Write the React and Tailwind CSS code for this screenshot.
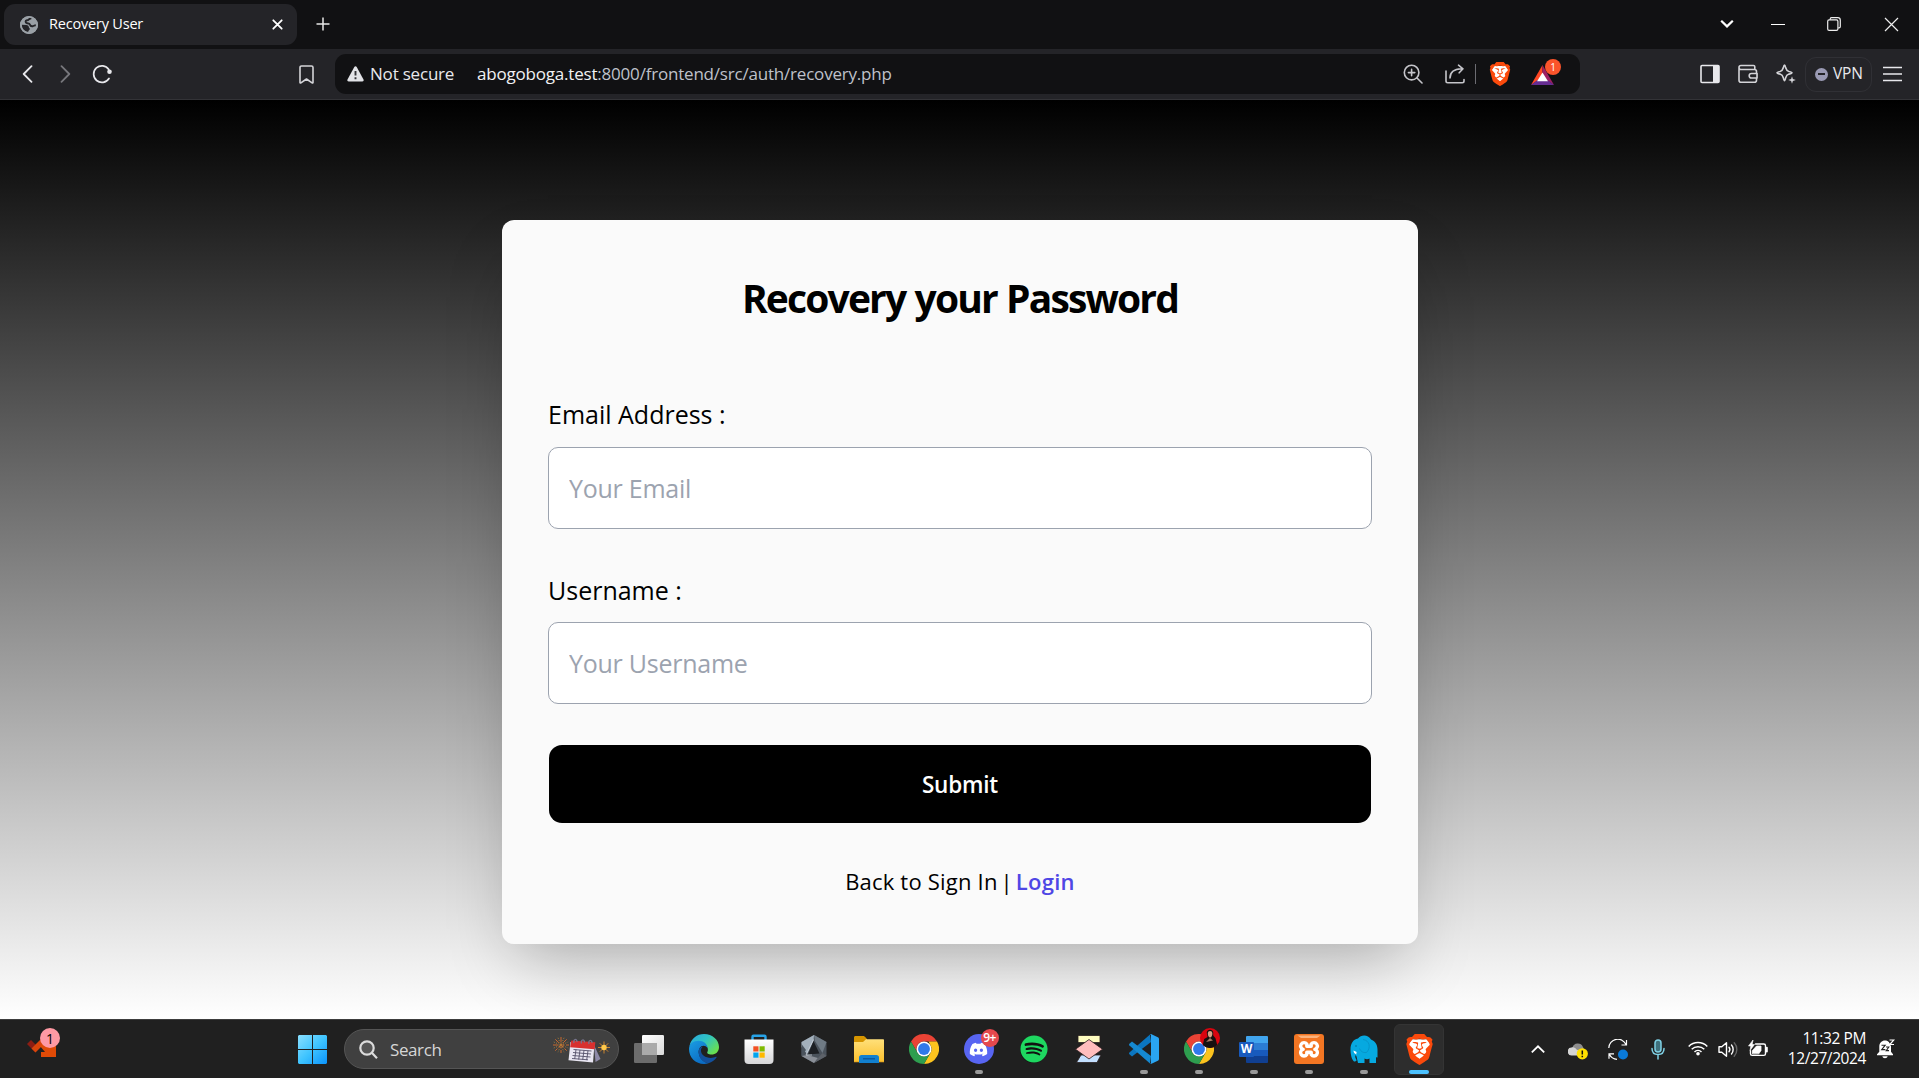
import React from "react";
import { SiBrave } from "react-icons/si";
import { FaDiscord, FaSpotify } from "react-icons/fa";

const line = {
  fill: "none",
  stroke: "currentColor",
  strokeLinecap: "round",
  strokeLinejoin: "round",
};

function TabStrip() {
  return (
    <div className="flex h-[49px] items-start bg-[#111113] pl-1 text-white">
      <div className="mt-1 flex h-[41px] w-[293px] items-center rounded-[11px] bg-[#242428] pl-4 pr-[14px]">
        <svg className="mt-px h-[18px] w-[18px]" viewBox="0 0 18 18">
          <circle cx="9" cy="9" r="9" fill="#9aa0a6" />
          <path
            d="M11.500 2.200C9.500 2 9 4 7 4.300 5 4.600 5.200 7 7 7.200c1.600.2 2.700.2 3 1.500.3 1.200 1.700 1.700 2.800 1.500 1-.2 1.700-1 3-1"
            fill="none"
            stroke="#242428"
            strokeWidth="1.900"
          />
          <path
            d="M1.800 8.800l4.600.3c1.500.1 2.400 1 2.400 2s1 .9 1 2-1.500 1.300-1.700 3C4 15.800 1.600 12.500 1.800 8.800z"
            fill="#242428"
          />
          <circle cx="9" cy="9" r="8.100" fill="none" stroke="#9aa0a6" strokeWidth="1.800" />
        </svg>
        <span className="ml-[11px] mt-[-1px] flex-1 whitespace-nowrap text-[14.500px] tracking-[-0.200px]">
          Recovery User
        </span>
        <svg className="h-[11px] w-[11px]" viewBox="0 0 11 11" {...line} strokeWidth="1.800">
          <path d="M1.300 1.300l8.400 8.400M9.700 1.300L1.300 9.700" />
        </svg>
      </div>
      <svg className="ml-[19px] mt-[17px] h-[14px] w-[14px]" viewBox="0 0 14 14" fill="none" stroke="#e8e8e8" strokeWidth="1.500">
        <path d="M7 .5v13M.5 7h13" />
      </svg>
      <div className="flex-1" />
      <div className="flex h-[48px] items-center pr-[20px]">
        <svg className="h-[10px] w-[14px]" viewBox="0 0 14 10" fill="none" stroke="#fff" strokeWidth="2.200">
          <path d="M1.200 1.800L7 7.400l5.800-5.600" />
        </svg>
        <div className="ml-[37px] h-px w-[14px] bg-white" />
        <svg className="ml-[42px] h-[14px] w-[14px]" viewBox="0 0 14 14" fill="none" stroke="#eee" strokeWidth="1.200">
          <rect x=".7" y="2.900" width="10.200" height="10.400" rx="1.400" />
          <path d="M3.200 2.700V2c0-.8.6-1.300 1.300-1.300h6.300c1.500 0 2.500 1 2.500 2.500v6.300c0 .8-.5 1.300-1.300 1.300h-.8" />
        </svg>
        <svg className="ml-[43px] h-[15px] w-[15px]" viewBox="0 0 15 15" fill="none" stroke="#eee" strokeWidth="1.200">
          <path d="M1 1l13 13M14 1L1 14" />
        </svg>
      </div>
    </div>
  );
}

function BraveMark({ size }) {
  return (
    <span className="relative flex items-center justify-center">
      <svg className="absolute" width={size} height={size} viewBox="0 0 24 24">
        <path d="M6 4h12l2.500 4-2 8.500L12 21.500 5.500 16.500 3.500 8z" fill="#fff" />
      </svg>
      <SiBrave className="relative text-[#fb4a0c]" size={size} />
    </span>
  );
}

function Toolbar() {
  return (
    <div className="flex h-[51px] items-center border-b border-[#333337] bg-[#242428] text-[#e8e8ec]">
      <svg className="ml-[22px] h-[18px] w-[11px]" viewBox="0 0 11 18" {...line} strokeWidth="1.800">
        <path d="M9.500 1.200L1.700 9l7.800 7.800" />
      </svg>
      <svg className="ml-[27px] h-[18px] w-[11px] text-[#77777c]" viewBox="0 0 11 18" {...line} strokeWidth="1.800">
        <path d="M1.500 1.200L9.300 9l-7.800 7.800" />
      </svg>
      <svg className="ml-[21px] h-5 w-5" viewBox="0 0 20 20" {...line} strokeWidth="1.700">
        <path d="M16.800 5.400A8.300 8.300 0 1 0 17 14.500" />
        <circle cx="17.500" cy="7.700" r="2.300" fill="currentColor" stroke="none" />
      </svg>
      <svg className="ml-[187px] h-[19px] w-[15px] text-[#d4d4d8]" viewBox="0 0 15 19" {...line} strokeWidth="1.600">
        <path d="M1 2.500C1 1.600 1.600 1 2.500 1h10c.9 0 1.500.6 1.500 1.500V17.500c0 .5-.5.7-.9.4L7.500 14l-5.600 3.900c-.4.3-.9.1-.9-.4z" />
      </svg>
      <div className="ml-[21px] flex h-10 w-[1245px] items-center rounded-[11px] bg-[#111113] pl-3">
        <svg className="h-4 w-[17px]" viewBox="0 0 17 16">
          <path d="M7.300.9c.5-.9 1.900-.9 2.400 0l6.800 12.600c.5 1-.2 2-1.200 2H1.700c-1 0-1.700-1-1.200-2z" fill="#e2e3e7" />
          <path d="M8.500 5v4.500M8.500 11.300v2" stroke="#333338" strokeWidth="1.900" />
        </svg>
        <span className="ml-[6px] mt-[-1px] w-[107px] whitespace-nowrap text-[17px] tracking-[-0.200px]">
          Not secure
        </span>
        <span className="mt-[-1px] flex-1 whitespace-nowrap text-[17px] tracking-[-0.200px] text-[#bfc1ca]">
          <span className="text-[#f2f2f4]">abogoboga.test</span>:8000/frontend/src/auth/recovery.php
        </span>
        <svg className="mr-[22px] h-5 w-5 text-[#c5c5ca]" viewBox="0 0 20 20" {...line} strokeWidth="1.600">
          <circle cx="8.600" cy="8.600" r="7.300" />
          <path d="M14 14l5 5M5.400 8.600h6.400M8.600 5.400v6.400" />
        </svg>
        <svg className="h-5 w-5 text-[#c5c5ca]" viewBox="0 0 20 20" {...line} strokeWidth="1.600">
          <path d="M1 7v10c0 1 .7 1.700 1.700 1.700h14.600c1 0 1.700-.7 1.700-1.700v-1.500M5 14C5 8.500 9 5 16.500 4.700M13.500 1.200L18 4.800l-3.800 4" />
        </svg>
        <div className="ml-[10px] h-5 w-px bg-[#6c6c72]" />
        <div className="ml-[12px]">
          <BraveMark size={24} />
        </div>
        <div className="relative ml-[19px] mr-[26px] mt-0.5">
          <svg className="h-5 w-[23px]" viewBox="0 0 23 20">
            <path d="M11.500 0L0 20l11.500-8z" fill="#ff4724" />
            <path d="M11.500 0L23 20l-11.500-8z" fill="#9e1f63" />
            <path d="M0 20h23l-6.500-5h-10z" fill="#662d91" />
            <path d="M11.500 7.500L6 16.200h11z" fill="#fff" />
          </svg>
          <span className="absolute left-[14px] top-[-6px] flex h-4 w-4 items-center justify-center rounded-full bg-[#fb542b] text-[10px] text-white">
            1
          </span>
        </div>
      </div>
      <div className="flex-1" />
      <svg className="h-5 w-5" viewBox="0 0 20 20" {...line} strokeWidth="1.600">
        <rect x="1" y="1.500" width="18" height="17" rx="1" />
        <rect x="13" y="1.500" width="6" height="17" fill="currentColor" stroke="none" />
      </svg>
      <svg className="ml-[18px] h-5 w-5 text-[#d4d4d8]" viewBox="0 0 20 20" {...line} strokeWidth="1.600">
        <path d="M1 3.500v12.800c0 1.200.8 2 2 2h13.500c1.200 0 2-.8 2-2V7.500c0-1.200-.8-2-2-2H3c-1.200 0-2-.8-2-2 0-1.200.8-2 2-2h12.500c.8 0 1.300.5 1.300 1.300v2.500" />
        <path d="M19 9.500h-5.500c-1.500 0-2.300 1-2.300 2.200s.8 2.300 2.300 2.300H19z" fill="#242428" />
      </svg>
      <svg className="ml-[18px] h-5 w-5 text-[#d4d4d8]" viewBox="0 0 20 20" {...line} strokeWidth="1.600">
        <path d="M8.500 1c.5 0 .8 1 1.200 2.800.6 2.400 1.200 3.100 3.300 3.700 1.700.4 3 .8 3 1.300s-1.300.9-3 1.300c-2.100.6-2.700 1.300-3.300 3.600C9.300 15.500 9 16.800 8.500 16.800s-.8-1.300-1.200-3.100C6.700 11.400 6 10.700 4 10.100c-1.700-.4-3-.8-3-1.300s1.300-.9 3-1.300c2-.6 2.700-1.300 3.300-3.700C7.700 2 8 1 8.500 1z" />
        <path d="M16 12.200l.9 2.900 2.900.9-2.900.9-.9 2.900-.9-2.900-2.900-.9 2.900-.9z" fill="currentColor" stroke="none" />
      </svg>
      <div className="ml-[9px] flex h-[35px] w-[67px] items-center rounded-[11px] border border-[#303035] pl-[9px]">
        <div className="flex h-[13px] w-[13px] items-center justify-center rounded-full bg-[#9a9ab4]">
          <div className="h-[2px] w-[7px] bg-[#242428]" />
        </div>
        <span className="ml-[5px] text-[15.500px] tracking-[-0.200px]">VPN</span>
      </div>
      <svg className="ml-[11px] mr-[17px] h-4 w-[19px]" viewBox="0 0 19 16" fill="none" stroke="currentColor" strokeWidth="1.700">
        <path d="M0 1.500h19M0 8h19M0 14.500h19" />
      </svg>
    </div>
  );
}

function Field({ label, placeholder, labelGap }) {
  return (
    <label className="flex flex-col">
      <span className="text-[25px] leading-[34px] text-black">{label}</span>
      <input
        className={`${labelGap} h-[82px] w-full rounded-[10px] border border-[#9ca3af] bg-white px-[20px] text-[25px] tracking-[-0.250px] placeholder:text-[#9ca3af]`}
        placeholder={placeholder}
      />
    </label>
  );
}

function Page() {
  return (
    <main className="flex h-[919px] justify-center bg-[linear-gradient(to_bottom,#000,#fff)] pt-[120px]">
      <form className="ml-px flex h-[724px] w-[916px] flex-col rounded-[12px] bg-[#fafafa] px-[46px] shadow-[0_31px_62px_-15px_rgba(0,0,0,0.25)]">
        <h1 className="mt-[51px] text-center text-[39px] font-bold leading-[54px] tracking-[-1.850px] text-black [word-spacing:1px]">
          Recovery your Password
        </h1>
        <div className="mt-[72px] flex flex-col gap-[44px]">
          <Field label="Email Address :" placeholder="Your Email" labelGap="mt-[16px]" />
          <Field label="Username :" placeholder="Your Username" labelGap="mt-[15px]" />
        </div>
        <button
          type="button"
          className="mx-px mt-[41px] h-[78px] rounded-[13px] bg-black pt-[2px] text-[22.500px] font-semibold tracking-[-0.200px] text-white"
        >
          Submit
        </button>
        <p className="mt-[42px] flex justify-center whitespace-nowrap text-[22px] leading-[32px] text-black">
          <span className="tracking-[0.200px]">Back to Sign In</span>
          <span className="mx-[3px]">|</span>
          <a className="font-semibold tracking-[0.300px] text-[#4f46e5]">Login</a>
        </p>
      </form>
    </main>
  );
}

function ChromeIcon() {
  return (
    <svg className="h-[30px] w-[30px]" viewBox="0 0 48 48">
      <path d="M3.200 12A24 24 0 0 1 44.800 12H24A12 12 0 0 0 13.600 30z" fill="#ea4335" />
      <path d="M44.800 12A24 24 0 0 1 24 48L34.400 30A12 12 0 0 0 34.400 18L31 12z" fill="#fcc31e" />
      <path d="M3.200 12A24 24 0 0 0 24 48L34.400 30A12 12 0 0 1 13.600 30z" fill="#2e9e4f" />
      <circle cx="24" cy="24" r="12" fill="#fff" />
      <circle cx="24" cy="24" r="9.500" fill="#3079ea" />
    </svg>
  );
}

function TaskViewIcon() {
  return (
    <svg className="h-7 w-[30px]" viewBox="0 0 30 28">
      <defs>
        <linearGradient id="tv" x1="0" y1="0" x2="1" y2="1">
          <stop offset="0" stopColor="#fff" />
          <stop offset="1" stopColor="#d9d9d9" />
        </linearGradient>
      </defs>
      <rect x="8" y="0" width="22" height="20" rx="1.200" fill="url(#tv)" />
      <rect x="0" y="8" width="23" height="20" rx="1.200" fill="#767676" fillOpacity=".88" />
      <path d="M8 8h15v12H8z" fill="#aaa" />
    </svg>
  );
}

function EdgeIcon() {
  return (
    <svg className="h-[30px] w-[30px]" viewBox="0 0 30 30">
      <defs>
        <linearGradient id="eg" x1="0" y1="0" x2="1" y2=".7">
          <stop offset="0" stopColor="#2aa7e0" />
          <stop offset=".5" stopColor="#2fc3c4" />
          <stop offset="1" stopColor="#6ae04e" />
        </linearGradient>
        <linearGradient id="eb" x1="0" y1="0" x2=".6" y2="1">
          <stop offset="0" stopColor="#1b9de2" />
          <stop offset="1" stopColor="#0b6cc4" />
        </linearGradient>
      </defs>
      <path d="M.5 12C2 4.500 8 0 15 0c8.500 0 15 6 15 13 0 5-3.500 7.500-7.500 7.500-3.200 0-5-1-4-2.700C20.500 14 16 8 10 8 5.500 8 2 9.500.5 12z" fill="url(#eg)" />
      <path d="M0 15C0 9.500 4.500 6.800 9.500 6.800c5 0 9 3.200 9 7.200-1-1.600-2.500-2.300-4-2.300-3 0-5.200 3.300-4.800 7 .5 5.300 5 9.600 9.800 10.500-1.400.6-3 .8-4.500.8C6.500 30 0 23.500 0 15z" fill="url(#eb)" />
      <path d="M9.700 17c-.6 6 4 11.800 9.800 12.200 3.500-.9 6-3 8-5.700.4-.6 0-1-.6-.7-1.700.8-3.200 1.100-5 1.100-5.500 0-10-3-9.900-7.400 0-1.600.8-3 1.700-3.700-2 0-3.700 1.700-4 4.200z" fill="#13509c" />
    </svg>
  );
}

function StoreIcon() {
  return (
    <svg className="h-[30px] w-[30px]" viewBox="0 0 30 30">
      <defs>
        <linearGradient id="st" x1="0" y1="0" x2="0" y2="1">
          <stop offset="0" stopColor="#fff" />
          <stop offset="1" stopColor="#d6d6d8" />
        </linearGradient>
      </defs>
      <path d="M8.500 6V2.800c0-.6.4-1 1-1h11c.6 0 1 .4 1 1V6" fill="none" stroke="#27a3e8" strokeWidth="2.400" />
      <path d="M.5 5.500h29V26a4 4 0 0 1-4 4h-21a4 4 0 0 1-4-4z" fill="url(#st)" />
      <path d="M9.300 12.300h5.200v5.200H9.300z" fill="#f25022" />
      <path d="M15.500 12.300h5.200v5.200h-5.200z" fill="#7fba00" />
      <path d="M9.300 18.500h5.200v5.200H9.300z" fill="#00a4ef" />
      <path d="M15.500 18.500h5.200v5.200h-5.200z" fill="#ffb900" />
    </svg>
  );
}

function HexIcon() {
  return (
    <svg className="h-7 w-[26px]" viewBox="0 0 26 28">
      <path d="M13 0l12.500 7v14L13 28 .5 21V7z" fill="#4b535c" />
      <path d="M13 0L.5 7v5L6 19 12.500 6z" fill="#a3b0bc" />
      <path d="M13 0l12.500 7-4 11L14 6z" fill="#6f7a84" />
      <path d="M.5 21L13 28l4-5-11-3z" fill="#8a8f97" />
      <path d="M25.500 21L13 28l4-5 4.500-5z" fill="#5d6269" />
      <path d="M12.500 6l6 12.500-11.500 1z" fill="#1d2024" />
      <path d="M12.500 4.500L5 20h6" fill="none" stroke="#cbd3da" strokeWidth=".8" />
      <path d="M.5 9L5 15l-4.500 6z" fill="#4a535d" />
    </svg>
  );
}

function FolderIcon() {
  return (
    <svg className="h-[27px] w-[30px]" viewBox="0 0 30 27">
      <defs>
        <linearGradient id="fo" x1="0" y1="0" x2="0" y2="1">
          <stop offset="0" stopColor="#ffe07a" />
          <stop offset="1" stopColor="#fbc02d" />
        </linearGradient>
      </defs>
      <path d="M0 1.500C0 .6.600 0 1.500 0H9c1.200 0 1.800.5 2.600 1.500L13 3v5H0z" fill="#d69500" />
      <path d="M0 6h9l3-2.800h17c.6 0 1 .4 1 1V26H0z" fill="url(#fo)" />
      <path d="M5 27v-5.500C5 20 6 19 7.500 19h15c1.500 0 2.500 1 2.500 2.500V27z" fill="#1280cf" />
      <path d="M9 22.800h12" stroke="#0a4f94" strokeWidth="1.200" />
      <path d="M0 25.300h5v1H0zM25 25.300h5v1h-5z" fill="#e9a820" />
    </svg>
  );
}

function DiscordIcon() {
  return (
    <div className="relative flex h-[30px] w-[30px] items-center justify-center rounded-full bg-[#5865f2]">
      <FaDiscord className="text-white" size={19} />
      <span className="absolute left-[17px] top-[-5px] flex h-[18px] w-[18px] items-center justify-center rounded-full bg-[#e5484d] text-[12px] font-semibold tracking-[-0.500px] text-white">
        9+
      </span>
    </div>
  );
}

function SpotifyIcon() {
  return (
    <div className="flex h-[27px] w-[27px] items-center justify-center rounded-full bg-[#111]">
      <FaSpotify className="shrink-0 text-[#1ed760]" size={28} />
    </div>
  );
}

function FlowIcon() {
  return (
    <svg className="h-[28px] w-[28px]" viewBox="0 0 28 28" stroke="#2a2020" strokeWidth=".8">
      <path d="M3 .5h22v7H3z" fill="#fffdc0" />
      <path d="M6 20h20l-4 7.500H1.500z" fill="#c3e0ff" />
      <path d="M14 4.500l13.500 9.700L14 24 .5 14.200z" fill="#ffbdbd" />
    </svg>
  );
}

function CodeIcon() {
  return (
    <svg className="h-[30px] w-[30px]" viewBox="0 0 30 30">
      <path d="M22 8L3 22.500 .4 20.300c-.5-.5-.5-1.200 0-1.700L21 .4z" fill="#0b76c0" />
      <path d="M22 22L3 7.500.4 9.700c-.5.5-.5 1.200 0 1.700L21 29.600z" fill="#1589d1" />
      <path d="M21 .2c.5-.2 1-.2 1.500 0l6.300 3c.7.4 1.200 1 1.200 1.900v19.800c0 .8-.5 1.500-1.200 1.900l-6.300 3c-.5.200-1 .2-1.500 0 .6-.1 1-.6 1-1.300V1.500c0-.7-.4-1.200-1-1.300z" fill="#2aa5f2" />
    </svg>
  );
}

function ChromeProfileIcon() {
  return (
    <div className="relative">
      <ChromeIcon />
      <svg className="absolute left-4 top-[-6px] h-5 w-5" viewBox="0 0 20 20">
        <circle cx="10" cy="10" r="10" fill="#d9040f" />
        <path d="M6.800 5C6.300.5 13.700.5 13.200 5v2.500l2.300 2.800 1.700 6.700c-4 4-10.400 4-14.400 0l1.400-6L7.600 9z" fill="#16100f" />
        <path d="M7.800 5.500c0-3.300 4.600-3.300 4.600 0 0 2.300-1 4-2.300 4s-2.300-1.700-2.300-4z" fill="#d6a084" />
        <path d="M6 14l4-4 3 2.500z" fill="#a87862" />
      </svg>
    </div>
  );
}

function WordIcon() {
  return (
    <div className="relative flex h-[27px] w-[29px] flex-col pl-[7px]">
      <div className="h-[7px] rounded-t-[1px] bg-[#41a5ee]" />
      <div className="h-[7px] bg-[#2b7cd3]" />
      <div className="h-[6px] bg-[#185abd]" />
      <div className="h-[7px] rounded-b-[1px] bg-[#103f91]" />
      <span className="absolute left-0 top-[6px] flex h-[15px] w-[15px] items-center justify-center rounded-[1px] bg-[#185abd] text-[12px] font-bold leading-none text-white">
        W
      </span>
    </div>
  );
}

function XamppIcon() {
  return (
    <svg className="h-[30px] w-[30px]" viewBox="0 0 30 30">
      <rect width="30" height="30" rx="3" fill="#f37623" />
      <path d="M3.500 1.500h23L23 4H7z" fill="#fbb27c" />
      <path
        d="M12.800 12.300V10a3.400 3.400 0 1 0-3.600 5.300 3.400 3.400 0 1 0 3.600 5.200v-2.300h4.400v2.300a3.400 3.400 0 1 0 3.600-5.200 3.400 3.400 0 1 0-3.600-5.300v2.300z"
        fill="none"
        stroke="#fff"
        strokeWidth="3.400"
        strokeLinejoin="round"
      />
    </svg>
  );
}

function ElephantIcon() {
  return (
    <svg className="h-[29px] w-[28px]" viewBox="0 0 28 29">
      <path
        d="M8 3.500C11-.5 18-.8 21 4.500c4 1.500 6.500 5 6.500 10v8l-1.500-.3V28h-6.500v-4.500c-1.500.9-3.500.9-5 0V28H8l-1.500-6.500-1-1.500c-.6 2 0 3.500 1.200 5C6 26.500 4.500 27 3.500 26 1.500 24 .5 19 .5 14.500.5 8.500 3 4.500 8 3.500z"
        fill="#06a9e0"
      />
      <path d="M13 4.500c7 1 8 8.500 3.500 13-4.500.6-6-2-7-4" fill="none" stroke="#0590c4" strokeWidth=".8" />
      <path d="M6.500 19.500c-.3-1-.2-1.800.2-2.500l-3.200-1.500c0 1.800 1 3.300 3 4z" fill="#fff" />
      <circle cx="6" cy="11" r=".7" fill="#055f86" />
    </svg>
  );
}

const apps = [
  { Icon: TaskViewIcon },
  { Icon: EdgeIcon },
  { Icon: StoreIcon },
  { Icon: HexIcon },
  { Icon: FolderIcon },
  { Icon: ChromeIcon },
  { Icon: DiscordIcon, open: true },
  { Icon: SpotifyIcon },
  { Icon: FlowIcon },
  { Icon: CodeIcon, open: true },
  { Icon: ChromeProfileIcon, open: true },
  { Icon: WordIcon, open: true },
  { Icon: XamppIcon, open: true },
  { Icon: ElephantIcon, open: true },
];

function SearchArt() {
  return (
    <svg className="mt-[3px] h-[28px] w-[60px]" viewBox="0 0 60 28">
      <g stroke="#c9682f" strokeWidth="1" fill="none">
        <path d="M8 0v16M0 8h16M2.300 2.300l11.400 11.400M13.700 2.300L2.300 13.700" strokeDasharray="5 1.500" />
        <path d="M5 .8l6 14.400M11 .8L5 15.200M.8 5l14.400 6M.8 11l14.400-6" stroke="#a8813a" strokeDasharray="1 1.500" />
      </g>
      <path d="M41 8l6.500 14-5 3z" fill="#8e8aa8" />
      <path d="M17.500 5l24 2-1.500 18.500-24.500-2.300z" fill="#e9e6f2" />
      <path d="M18.300 3.500l24 1.700-.7 7-24.500-2z" fill="#d8302f" />
      <path d="M20.500 12.500l18 1.500M20 15.500l18 1.500M19.500 18.500l18 1.500M19 21.500l16 1.300M23 12.500l-1.300 9.500M27 13l-1.300 9.500M31 13.300l-1.300 9.500M35 13.600l-1.300 9.500" stroke="#55506a" strokeWidth=".9" />
      <path d="M21 6c-1-4 3-5 3-1M28.500 6.500c-1-4 3-5 3-1M36 7c-1-4 3-5 3-1" fill="none" stroke="#77748c" strokeWidth="1.300" />
      <path d="M51 4.500v12M45 10.500h12M46.800 6.300l8.400 8.400M55.200 6.300l-8.400 8.400" stroke="#c8822e" />
      <circle cx="51" cy="10.500" r="2.700" fill="#ffc94a" />
    </svg>
  );
}

function Tray() {
  return (
    <div className="flex h-[59px] items-center text-white">
      <svg className="h-2 w-[14px]" viewBox="0 0 14 8" fill="none" stroke="currentColor" strokeWidth="1.800">
        <path d="M.8 7.300L7 1.300l6.200 6" />
      </svg>
      <svg className="ml-[23px] mt-1 h-[18px] w-[20px]" viewBox="0 0 20 18">
        <path d="M4.500 5.500a5.500 5.500 0 0 1 10.300-.8l2 3.800-8 4z" fill="#8d8d8d" />
        <path d="M4 13.500a4 4 0 0 1-.5-8c2.500-.6 4 .5 5 2l6 3-3 3z" fill="#d4d4d4" />
        <circle cx="14.300" cy="11.800" r="5.600" fill="#ffe000" />
        <path d="M14.300 8.500v4M14.300 13.800v1.400" stroke="#111" strokeWidth="1.500" />
      </svg>
      <svg className="ml-5 h-[21px] w-5" viewBox="0 0 20 21" fill="none" stroke="#fff" strokeWidth="1.200">
        <path d="M.8 9A9 9 0 0 1 18 5.500M18.500 1v5h-5M1 19.800v-5h5M1.500 15.500C3 18.500 5.500 20 9 20.300" />
        <circle cx="15" cy="15.500" r="5" fill="#0a7ad9" stroke="none" />
      </svg>
      <svg className="ml-[23px] h-[21px] w-[14px] text-[#7fd0e4]" viewBox="0 0 14 21" {...line} strokeWidth="1.500">
        <rect x="4" y=".9" width="6" height="12" rx="3" fill="#3f717d" />
        <path d="M1 9.500c0 4 2.600 6 6 6s6-2 6-6M7 15.500v4.500" />
      </svg>
      <svg className="ml-[23px] mt-[-2px] h-[15px] w-5" viewBox="0 0 20 15" fill="none" stroke="currentColor" strokeWidth="1.500">
        <path d="M.7 5.500a13 13 0 0 1 18.600 0M3.700 8.300a9 9 0 0 1 12.600 0M6.500 11a5 5 0 0 1 7 0" />
        <circle cx="10" cy="12.800" r="1.800" fill="currentColor" stroke="none" />
      </svg>
      <svg className="ml-[10px] h-[17px] w-5" viewBox="0 0 20 17" {...line} strokeWidth="1.400">
        <path d="M1 5.800h2.800L8.500 1.700v13.600L3.800 11.200H1z" />
        <path d="M11 6.300c1 1.200 1 3.200 0 4.400M13.500 4c2.200 2.500 2.200 6.500 0 9" />
        <path d="M16.200 1.800c3.500 3.700 3.500 9.700 0 13.400" stroke="#666" />
      </svg>
      <svg className="ml-[10px] mt-[-2px] h-[17px] w-5" viewBox="0 0 20 17" {...line} strokeWidth="1.400">
        <path d="M7.500 4h8.300c1 0 1.700.7 1.700 1.700v8c0 1-.7 1.700-1.700 1.700H4.200c-1 0-1.700-.7-1.700-1.700v-3" />
        <path d="M4.500 13.500v-3l4-4.500h4.500v4.500l-2 3z" fill="currentColor" strokeWidth=".8" />
        <path d="M18.800 7.800v3.800" strokeWidth="2" />
        <path d="M5 0L.5 6h2.300L2 10.500 6.500 4.500H4.300z" fill="currentColor" strokeWidth=".6" />
      </svg>
      <div className="mt-[-2px] flex w-[98px] flex-col items-end whitespace-nowrap text-[15.500px] leading-5 tracking-[-0.400px]">
        <span>11:32 PM</span>
        <span>12/27/2024</span>
      </div>
      <div className="relative ml-[11px] mr-[24px] mt-[-1px]">
        <svg className="h-5 w-[18px]" viewBox="0 0 18 20">
          <path d="M2.300 7.500C2.300 4 4.800 1.500 8 1.500s6 2.500 6 6v5.300l2 2.500v.9H0v-.9l2.300-2.500zM5.300 17.300h5.400c-.3 1.300-1.300 2-2.700 2s-2.400-.7-2.700-2z" fill="#fff" />
          <path d="M10.500 0H18v7h-4z" fill="#202020" />
          <path d="M12.500 1h4.300L12.800 5.500H17" fill="none" stroke="#fff" strokeWidth="1.200" />
          <path d="M4.500 6.200h3.700L4.700 10.600h3.700M9 8h2.800l-2.600 3.600H12" fill="none" stroke="#202020" strokeWidth="1.100" />
        </svg>
      </div>
    </div>
  );
}

function Taskbar() {
  return (
    <footer className="flex h-[59px] items-center border-t border-[#3d3d3d] bg-[#202020]">
      <div className="relative mb-[11px] ml-[26px] h-[31px] w-[36px]">
        <svg className="h-[31px] w-[31px]" viewBox="0 0 31 31">
          <path d="M1 16l4-4 6.500 6.500-2 6z" fill="#8c1d13" />
          <path d="M5.500 20.500L15 11l4 4L9.500 24.500z" fill="#d8450b" />
          <path d="M15 29v-5h4l-5-6 6-5 7 6 3-2v12z" fill="#e04a06" />
        </svg>
        <span className="absolute left-[14px] top-0 flex h-5 w-5 items-center justify-center rounded-full bg-[#ff99a4] text-[14px] text-black">
          1
        </span>
      </div>
      <svg className="ml-[236px] h-[29px] w-[29px]" viewBox="0 0 29 29">
        <defs>
          <linearGradient id="win" x1="0" y1="0" x2="29" y2="29" gradientUnits="userSpaceOnUse">
            <stop offset="0" stopColor="#8ae0ff" />
            <stop offset=".5" stopColor="#3fc4ff" />
            <stop offset="1" stopColor="#0a93fb" />
          </linearGradient>
        </defs>
        <path d="M1 0h13v14H0V1zM15 0h13l1 1v13H15zM0 15h14v14H1l-1-1zM15 15h14v13l-1 1H15z" fill="url(#win)" />
      </svg>
      <div className="ml-[17px] flex h-10 w-[275px] items-center rounded-full border border-[#555] bg-[#404040] pl-[14px] pr-[5px]">
        <svg className="h-[19px] w-[19px]" viewBox="0 0 19 19" fill="none" stroke="#dcdcdc" strokeWidth="2.200">
          <circle cx="8" cy="8" r="6.700" fill="#565656" />
          <path d="M12.800 12.800l5.200 5.400" />
        </svg>
        <span className="ml-[12px] mt-px flex-1 text-[17px] tracking-[-0.400px] text-[#d6d6d6]">Search</span>
        <SearchArt />
      </div>
      <nav className="ml-[2px] flex">
        {apps.map(({ Icon, open }, i) => (
          <div key={i} className="relative flex h-[59px] w-[55px] items-center justify-center">
            <Icon />
            {open && <div className="absolute bottom-[5px] h-1 w-2 rounded-full bg-[#9a9a9a]" />}
          </div>
        ))}
        <div className="relative mx-[3px] my-[4px] flex h-[51px] w-[50px] items-center justify-center rounded-md border border-[#343434] bg-[#2d2d2d]">
          <BraveMark size={31} />
          <div className="absolute bottom-0 h-1 w-5 rounded-full bg-[#4cc2ff]" />
        </div>
      </nav>
      <div className="flex-1" />
      <Tray />
    </footer>
  );
}

export default function App() {
  return (
    <div className="flex h-[1078px] w-[1919px] flex-col overflow-hidden font-['Open_Sans','Noto_Sans',sans-serif]">
      <TabStrip />
      <Toolbar />
      <Page />
      <Taskbar />
    </div>
  );
}
